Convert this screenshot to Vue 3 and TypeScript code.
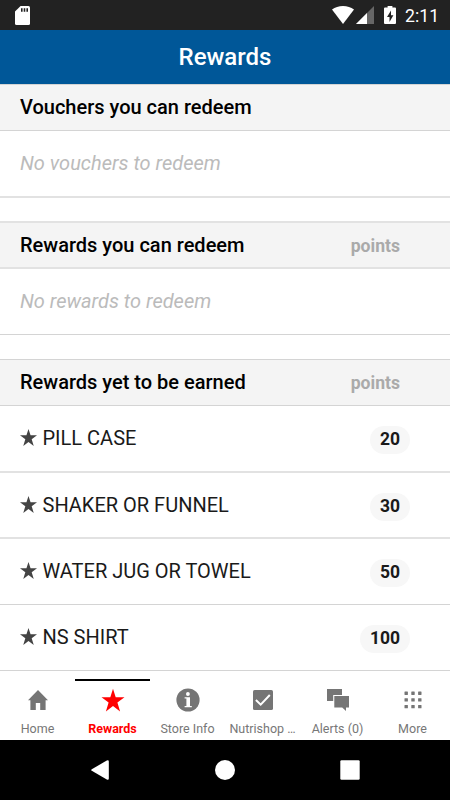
<script setup lang="ts">
interface Reward {
  name: string
  points: number
  edge: 'crisp' | 'soft'
}

interface Tab {
  label: string
  icon: 'home' | 'star' | 'info' | 'check' | 'chat' | 'grid'
  active?: boolean
}

const rewards: Reward[] = [
  { name: 'PILL CASE', points: 20, edge: 'soft' },
  { name: 'SHAKER OR FUNNEL', points: 30, edge: 'soft' },
  { name: 'WATER JUG OR TOWEL', points: 50, edge: 'crisp' },
  { name: 'NS SHIRT', points: 100, edge: 'crisp' },
]

const tabs: Tab[] = [
  { label: 'Home', icon: 'home' },
  { label: 'Rewards', icon: 'star', active: true },
  { label: 'Store Info', icon: 'info' },
  { label: 'Nutrishop …', icon: 'check' },
  { label: 'Alerts (0)', icon: 'chat' },
  { label: 'More', icon: 'grid' },
]

const dots = [0, 1, 2, 3, 4, 5, 6, 7, 8].map((i) => ({
  x: 3.5 + (i % 3) * 6.8,
  y: 3.5 + Math.floor(i / 3) * 6.7,
}))
</script>

<template>
  <div class="screen">
    <div class="status">
      <svg class="sd" viewBox="0 0 15 19">
        <path fill="#fff" d="M5.6 0H13.5A1.5 1.5 0 0 1 15 1.5V17.5A1.5 1.5 0 0 1 13.5 19H1.5A1.5 1.5 0 0 1 0 17.5V5.6Z" />
        <path fill="#222" d="M6 2.3h1.6v3.4H6zM8.7 2.3h1.6v3.4H8.7zM11.4 2.3h1.6v3.4h-1.6z" />
      </svg>
      <svg class="wifi" viewBox="0 0 22 18">
        <path fill="#fff" d="M11 18L0 3.6Q4.6 0 11 0T22 3.6Z" />
      </svg>
      <svg class="signal" viewBox="0 0 18 18">
        <path fill="#666" d="M18 0V18H0Z" />
        <path fill="#fff" d="M11 7V18H0Z" />
      </svg>
      <svg class="battery" viewBox="0 0 12 18">
        <path fill="#fff" d="M3.6 0h4.8v1.6H11a1 1 0 0 1 1 1V17a1 1 0 0 1-1 1H1a1 1 0 0 1-1-1V2.6a1 1 0 0 1 1-1h2.6z" />
        <path fill="#222" d="M7 4.5L3 11h2.5v5L9.4 9.2H7z" />
      </svg>
      <span class="clock">2:11</span>
    </div>

    <header class="title">Rewards</header>

    <main>
      <section>
        <div class="head first"><h2>Vouchers you can redeem</h2></div>
        <p class="empty">No vouchers to redeem</p>
      </section>
      <section>
        <div class="head second"><h2>Rewards you can redeem</h2><span>points</span></div>
        <p class="empty short">No rewards to redeem</p>
      </section>
      <section>
        <div class="head third"><h2>Rewards yet to be earned</h2><span>points</span></div>
        <ul>
          <li v-for="(r, i) in rewards" :key="r.name" :class="[r.edge, 'row' + i]">
            <svg class="bullet" viewBox="0 0 24 24">
              <path d="M12 0L14.9 8.9H24L16.5 14.4L19.4 24L12 18.3L4.6 24L7.5 14.4L0 8.9H9.1Z" />
            </svg>
            <span class="name">{{ r.name }}</span>
            <span class="badge">{{ r.points }}</span>
          </li>
        </ul>
      </section>
    </main>

    <nav class="tabs">
      <div v-for="t in tabs" :key="t.label" class="tab" :class="{ active: t.active }">
        <svg viewBox="0 0 24 24">
          <path v-if="t.icon === 'home'" d="M12 2L22 12.3H19.6V22H14.2V15H9.8V22H4.4V12.3H2Z" />
          <path v-else-if="t.icon === 'star'" d="M12 .8L14.7 9.3H23.5L16.4 14.4L19.1 23.4L12 17.9L4.9 23.4L7.6 14.4L.5 9.3H9.3Z" />
          <template v-else-if="t.icon === 'info'">
            <circle cx="12" cy="12" r="11.6" />
            <circle cx="11.9" cy="6" r="1.9" fill="#fff" />
            <path fill="#fff" d="M8.6 9.3H14V18H15.8V19.2H8.6V18H10.4V10.5H8.6Z" />
          </template>
          <template v-else-if="t.icon === 'check'">
            <rect x="2" y="2" width="20" height="20" rx="1.6" />
            <path d="M4.9 12L9.7 16.6L18.8 7" fill="none" stroke="#fff" stroke-width="2" />
          </template>
          <template v-else-if="t.icon === 'chat'">
            <path d="M1 1H16V7H7.2V13H1Z" />
            <path d="M8.3 8H23V19.5H20V23L16.2 19.5H8.3Z" />
          </template>
          <template v-else>
            <rect v-for="(d, i) in dots" :key="i" :x="d.x" :y="d.y" width="3.4" height="3.4" rx=".4" />
          </template>
        </svg>
        <span>{{ t.label }}</span>
      </div>
    </nav>

    <footer class="system">
      <svg viewBox="0 0 20 20"><path d="M1.8 9.2L16.8 .5Q18.8-.3 18.8 1.6V18.4Q18.8 20.3 16.8 19.5L1.8 10.8Q.5 10 1.8 9.2Z" /></svg>
      <svg viewBox="0 0 20 20"><circle cx="10" cy="10" r="10" /></svg>
      <svg viewBox="0 0 20 20"><rect x=".3" y=".3" width="19.4" height="19.4" rx="1.2" /></svg>
    </footer>
  </div>
</template>

<style>
body {
  background: #fff;
}
</style>

<style scoped>
.screen {
  box-sizing: border-box;
  width: 450px;
  height: 800px;
  overflow: hidden;
  display: flex;
  flex-direction: column;
  background: #fff;
  font-family: Roboto, 'Liberation Sans', sans-serif;
  color: #1a1a1a;
}
.screen * {
  box-sizing: border-box;
}
svg {
  display: block;
  flex: none;
}
.status {
  height: 30px;
  flex: none;
  display: flex;
  align-items: center;
  padding: 0 10px 0 15px;
  background: #222;
}
.sd { width: 15px; height: 19px; }
.wifi { width: 22px; height: 18px; margin-left: auto; }
.signal { width: 18px; height: 18px; margin-left: 2px; }
.battery { width: 12px; height: 18px; margin-left: 10px; }
.clock {
  width: 35px;
  margin-left: 9px;
  padding-top: 2px;
  font-size: 17.7px;
  line-height: 22px;
  color: #fff;
  white-space: nowrap;
}
.title {
  height: 54px;
  flex: none;
  background: #005798;
  color: #fff;
  font-size: 24px;
  font-weight: 500;
  line-height: 54px;
  text-align: center;
}
main {
  height: 587px;
  flex: none;
}
.head {
  display: flex;
  align-items: center;
  justify-content: space-between;
  padding: 0 50px 0 20px;
  background: #f4f4f4;
  border: solid #d4d4d4;
  border-width: 1px 0;
}
.first { height: 47px; padding-bottom: 1px; }
.second { height: 48px; margin-top: 23px; border-width: 2px 0; border-color: #e2e2e2; }
.third { height: 47px; margin-top: 24px; padding-bottom: 1px; }
h2 {
  margin: 0;
  font-size: 20px;
  font-weight: 500;
  line-height: 24px;
  color: #000;
}
.head span {
  margin-top: 2px;
  font-size: 17.6px;
  font-weight: 700;
  line-height: 22px;
  color: #aaa;
}
.empty {
  height: 67px;
  margin: 0;
  padding: 0 20px;
  font-size: 20px;
  font-style: italic;
  line-height: 65px;
  color: #bbb;
  border-bottom: 2px solid #e2e2e2;
}
.short { height: 66px; border-bottom: 1px solid #d4d4d4; }
ul {
  margin: 0;
  padding: 0;
  list-style: none;
}
li {
  display: flex;
  align-items: flex-start;
  padding: 20px 40px 0 20px;
  border-bottom: 1px solid #d4d4d4;
}
.soft { border-bottom: 2px solid #e2e2e2; }
.row0 { height: 67px; }
.row1,
.row2,
.row3 { height: 66px; }
.bullet { width: 17px; height: 17px; margin-top: 3px; fill: #444; }
.row1 .bullet { margin-top: 2.5px; }
.name {
  flex: 1;
  margin-left: 5.5px;
  font-size: 20px;
  line-height: 24px;
}
.badge {
  height: 28px;
  padding: 0 10px;
  border-radius: 14px;
  background: #f7f7f7;
  font-size: 17.5px;
  font-weight: 700;
  line-height: 26px;
}
.row1 .badge { margin-top: -.5px; }
.tabs {
  display: flex;
  flex: none;
  height: 69px;
  padding-top: 8px;
}
.tab {
  width: 75px;
  display: flex;
  flex-direction: column;
  align-items: center;
  padding-top: 7px;
  border-top: 2px solid transparent;
  color: #777;
  fill: #757575;
  font-size: 12.5px;
  line-height: 16px;
  white-space: nowrap;
}
.tab svg { width: 24px; height: 24px; }
.tab span { margin-top: 9px; }
.active {
  border-top-color: #000;
  color: #f00;
  fill: #f00;
  font-weight: 700;
}
.system {
  flex: none;
  height: 60px;
  display: flex;
  align-items: center;
  justify-content: center;
  gap: 105px;
  background: #000;
}
.system svg { width: 20px; height: 20px; fill: #fff; }
</style>
